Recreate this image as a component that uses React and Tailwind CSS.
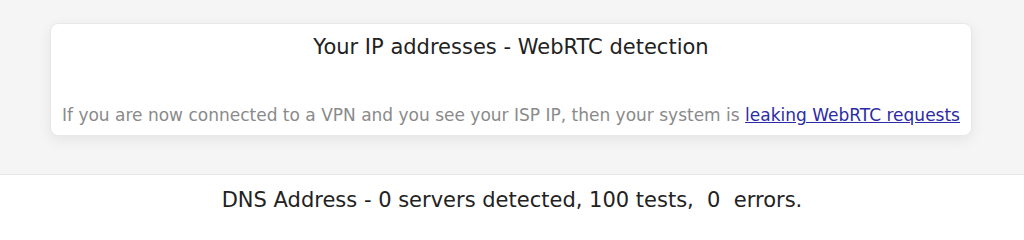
export default function App() {
  return (
    <div className="w-[1024px] h-[240px] bg-white font-['DejaVu_Sans',Verdana,sans-serif]">
      <section className="h-[175px] bg-[#f5f5f5] border-b border-[#e6e6e6] pt-[23px] pl-[50px] pr-[52px]">
        <div className="h-[113px] rounded-[8px] border border-[#e8e8e8] bg-white shadow-[0_4px_14px_rgba(0,0,0,0.07)] flex flex-col items-center px-[11px]">
          <h2 className="mt-[10px] text-[21px] leading-[26px] text-[#222]">
            Your IP addresses - WebRTC detection
          </h2>
          <p className="mt-[44px] text-[17px] leading-[22px] text-[#8a8a8a] whitespace-nowrap">
            If you are now connected to a VPN and you see your ISP IP, then your system is{" "}
            <a href="#" className="text-[#2b2ba5] underline">
              leaking WebRTC requests
            </a>
          </p>
        </div>
      </section>
      <p className="pt-[12px] text-center text-[21px] leading-[26px] text-[#222] whitespace-pre">
        DNS Address - 0 servers detected, 100 tests,  0  errors.
      </p>
    </div>
  );
}
